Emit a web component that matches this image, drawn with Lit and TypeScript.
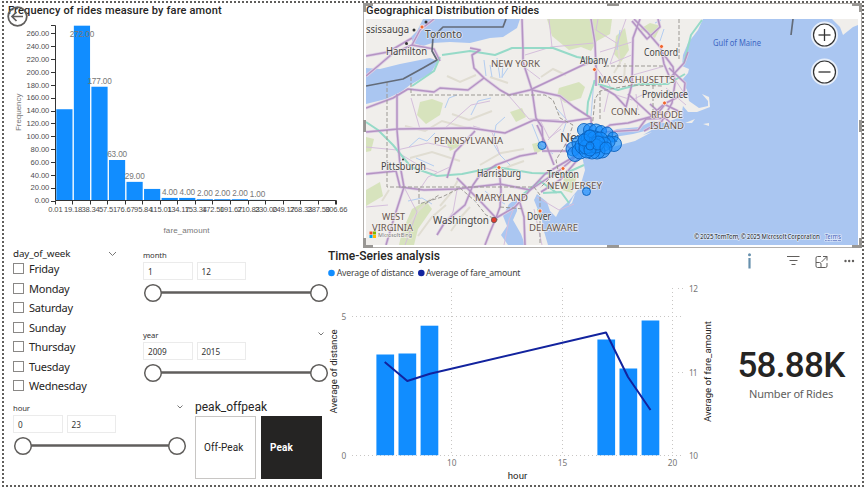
import { LitElement, html, svg, css } from "lit";
import { customElement, property } from "lit/decorators.js";

const DIN = css`Roboto, "Liberation Sans", sans-serif`;
const SEGOE = css`"Noto Sans", "Open Sans", sans-serif`;

/* ---------- Histogram ---------- */
@customElement("fare-histogram")
class FareHistogram extends LitElement {
  static styles = css`
    :host { display: block; }
    .title { margin: 0; padding-left: 4px; height: 16px; font: 500 11px/15px ${DIN}; letter-spacing: 0.16px; color: #252423; white-space: nowrap; }
    svg { display: block; }
    text { font-family: "Liberation Sans", Arial, sans-serif; }
    .bar { fill: #118dff; }
    .axis { stroke: #333; fill: none; }
    .tick { font-size: 7.6px; fill: #4d4d4d; }
    .val { font-size: 8.2px; fill: #777; }
    .name { font-size: 8px; fill: #777; }
  `;
  values = [142, 272, 177, 63, 29, 18, 4, 4, 2, 2, 2, 1];
  edges = ["0.01", "19.18", "38.34", "57.51", "76.67", "95.84", "115.01", "134.17", "153.34", "172.50", "191.67", "210.83", "230.00", "249.17", "268.33", "287.50", "306.66"];
  render() {
    const x = (i: number) => 55.5 + i * 17.55;
    const y = (v: number) => 200.5 - v * 0.6427;
    const yt = Array.from({ length: 14 }, (_, i) => i * 20);
    return html`<h2 class="title">Frequency of rides measure by fare amont</h2>
      <svg width="358" height="229" viewBox="4 19 358 229">
        ${this.values.map((v, i) => svg`<rect class="bar" x=${x(i) + 0.8} y=${y(v)} width="16.2" height=${v * 0.6427}></rect>`)}
        ${this.values.map((v, i) => i === 0 || i === 5 ? "" : svg`<text class="val" x=${x(i) + 9} y=${v === 272 ? 36.5 : y(v) - 3.2} text-anchor="middle" textLength=${v > 99 ? 24.4 : v > 9 ? 20 : 15.6}>${v}.00</text>`)}
        <path class="axis" d="M51 25.5H55.5V200.5H336.5V204.5"></path>
        ${yt.map(v => svg`<path class="axis" d="M51 ${Math.round(y(v)) + 0.5}h4.5"></path>
          <text class="tick" x="49.3" y=${y(v) + 2.8} text-anchor="end" textLength=${v > 99 ? 22.7 : v > 9 ? 18.7 : 14.6}>${v}.00</text>`)}
        ${this.edges.map((t, i) => svg`<path class="axis" d="M${Math.round(x(i)) - 0.5} 200.5v4"></path>
          <text class="tick" x=${x(i)} y="212.2" text-anchor="middle" textLength=${t.length === 4 ? 14.3 : t.length === 5 ? 18.3 : 22.3}>${t}</text>`)}
        <text class="name" transform="translate(21.3 112.3) rotate(-90)" text-anchor="middle" textLength="37.5">Frequency</text>
        <text class="name" x="186.5" y="233" text-anchor="middle" textLength="46">fare_amount</text>
      </svg>`;
  }
}

/* ---------- Map ---------- */
@customElement("ride-map")
class RideMap extends LitElement {
  static styles = css`
    :host { display: block; position: relative; box-sizing: border-box; padding: 0 3px 0 2px; border: 1px solid #b3b0ad; }
    .title { margin: 0; height: 15px; font: 500 11px/13px ${DIN}; letter-spacing: 0.16px; color: #252423; white-space: nowrap; }
    .map { display: block; overflow: hidden; }
    .handles { position: absolute; left: -1px; top: -1px; fill: none; stroke: #999794; stroke-width: 3; }
    text { font-family: ${SEGOE}; paint-order: stroke; stroke: #f4f2efcc; stroke-width: 1.6px; stroke-linejoin: round; }
    .city { fill: #444; font-size: 10px; }
    .state { fill: #66554d; font-size: 9.8px; }
    .sea { fill: #3c66c4; font-size: 8.2px; stroke: none; }
    .copy { fill: #222; font-size: 6.3px; stroke: #d9e5f8; }
    .water { fill: #aac6f1; }
    .land { fill: #f0eeeb; }
    .wood { fill: #cfdfad; opacity: 0.75; }
    .relief { fill: none; stroke: #e0ddd2; stroke-width: 2; }
    .river { fill: none; stroke: #b3cdf1; stroke-width: 1; }
    .halo { fill: none; stroke: #decfe4; stroke-width: 3; stroke-linejoin: round; }
    .road { fill: none; stroke: #b594c4; stroke-width: 1.5; stroke-linejoin: round; }
    .minor { fill: none; stroke: #d5bfdc; stroke-width: 1; }
    .toll { fill: none; stroke: #96dac8; stroke-width: 2; stroke-linejoin: round; }
    .limit { fill: none; stroke: #9c9994; stroke-width: 1; stroke-dasharray: 4 2; }
    .nation { fill: none; stroke: #636b78; stroke-width: 1.7; stroke-linejoin: round; }
    .pin { fill: #118dff; fill-opacity: 0.62; stroke: #0b62bd; stroke-width: 0.9; }
    .zoom { fill: #fff; stroke: #333; stroke-width: 1.2; }
    .glow { fill: none; stroke: #e8effa; stroke-width: 3; }
    .sign { stroke: #333; stroke-width: 1.3; }
  `;
  roads = [
    "M366 76L378 66 392 54 412 45 420 30 434 19", "M412 45l22 4 6 12", "M366 56l22-4 24-14",
    "M366 108L393 98 408 89 434 92 440 88 468 90 484 78 500 90 509 95 530 90 583 65 595 61",
    "M397 94L397 130 400 165 404 187 394 218 386 245", "M484 78L474 68 472 55 480 50 470 48",
    "M522 19L523 50 523 62 532 90 536 118 542 127 543 143", "M532 90L560 96 574 107 591 118 592 140",
    "M591 19l4 24 1 25 0 18", "M366 132L398 129 470 128 505 133 534 120 565 122 591 118",
    "M366 174L396 171 400 187 424 190 456 189 500 184 530 190 545 174 560 165 582 152",
    "M447 178L455 152 475 131", "M537 153L520 156 496 165 480 175 473 185 465 205 445 222 437 235",
    "M499 167L501 190 500 207 496 218", "M457 178L469 190 482 203 496 218",
    "M496 218L515 207 530 190 560 170 586 148", "M496 218L490 232 485 245",
    "M537 125L547 147 554 165", "M542 151h48", "M600 86L615 95 626 107 632 84 633 38 640 19",
    "M591 140L610 125 628 123 650 117 664 104 680 112", "M634 19l14 14 13 15 3 16 6 14 14-15 4-11",
    "M662 52l11 15 2 16-3 20-10 18-18 10", "M628 94l26 24 12-15 18-9 1-11-16-15",
    "M650 104l24 22M604 132l34-2 8-11 22-1", "M520 203l4 14 1 28", "M565 144l15 13-20 23-19 12", "M632 21l15 18 13-12-2-8",
  ];
  minor = [
    "M366 147l31 3 31-7 24 5", "M397 152l23 14 17 6M404 187l13 25-12 33", "M420 129l-9-31M509 96l20 23 30 1M560 96l6 24-18 20",
    "M444 129l27-24 19-4M366 207l22-2M457 190l-4 22-14 19", "M525 55l26-8 43-4M552 47l-3-28M523 66l17 13",
    "M596 67l14 19-6 26M600 52l32-10M626 19l-16 45 24-10", "M515 205l-6 15-5 25M534 209l8 36M537 197l22 13 15-6",
    "M610 93l22 7 16-8M633 75l32-9M636 94l2 16M674 78l12 18M666 88l20 17M598 19l-2 11 22 14",
    "M540 120l9 18 12-9M500 155l-8-23-19-6M420 189l8-12 24-11",
  ];
  pins: number[][] = [
    [542, 145.5, 4], [586.5, 191.5, 4], [584, 130, 6.5], [590, 130, 6.5], [596, 131, 7], [601, 131, 5.5], [607, 133, 6], [613, 137, 5], [614, 144, 7.5], [609, 142, 6],
    [573, 149, 7], [575, 154, 7.5], [579, 143, 7], [580, 151, 8], [583, 146, 8], [586, 141, 8], [590, 139, 9], [595, 139, 8], [600, 140, 8], [604, 144, 7], [602, 150, 8], [597, 151, 8],
    [592, 151, 8], [587, 150, 8], [590, 146, 7], [593, 144, 7], [588, 143, 6], [596, 146, 7], [586, 147, 7], [590, 150, 6], [598, 143, 7], [584, 140, 6], [590, 136, 6], [590, 146, 4], [606, 148, 6],
  ];
  labels: [string, number, number, number, string][] = [
    ["ssissauga", 366, 33, 43, "city"], ["Toronto", 425, 38, 37, "city"], ["Hamilton", 386, 55, 41, "city"], ["Albany", 580, 64, 28, "city"],
    ["Concord", 644, 56, 34, "city"], ["Providence", 642, 98, 46, "city"], ["Pittsburgh", 381, 170, 45, "city"], ["Harrisburg", 477, 177, 44, "city"],
    ["Trenton", 547, 178, 32, "city"], ["Washington", 433, 224, 56, "city"], ["Dover", 527, 220, 24, "city"],
    ["NEW YORK", 491, 67, 49, "state"], ["MASSACHUSETTS", 598, 83, 77, "state"], ["CONN.", 611, 115, 29, "state"], ["RHODE", 651, 118, 32, "state"],
    ["ISLAND", 650, 129, 34, "state"], ["PENNSYLVANIA", 434, 144, 69, "state"], ["NEW JERSEY", 547, 189, 55, "state"], ["MARYLAND", 475, 201, 53, "state"],
    ["WEST", 382, 220, 23, "state"], ["VIRGINIA", 372, 231, 41, "state"], ["DELAWARE", 529, 231, 49, "state"], ["Gulf of Maine", 713, 46, 48, "sea"],
  ];
  render() {
    return html`<h2 class="title">Geographical Distribution of Rides</h2>
      <svg class="map" width="492" height="226" viewBox="366 19 492 226">
        <rect class="land" x="366" y="19" width="492" height="226"></rect>
        <path class="wood" d="M547 19l5 17 17 14 12-3 10 4 6-10 13-7 2-15zM559 88l20-6 6 5-4 11-16 5-8-7zM420 102l12-3 11 4-3 12-14 9-9-9zM510 112l12-4 4 9-10 5zM366 190l14-8 3 14-17 10zM402 232l10-23 14-8 6 8-14 20-4 16h-15zM616 36l9-8 4 22-8 12-7-8zM532 144l8-2 3 8-8 4zM640 29l10-6 11 3-6 12zM366 137l8 2-3 12-5 1zM565 172l12 4-5 17-10-3zM445 140l12-2 3 8-10 5z"></path>
        <path class="relief" d="M405 126l20 5 17-10 25 7M410 158l22-6 28 9M452 114l17 6 23-9M408 226l11-16 12-11M418 236l14-19 14-12M440 206l11-13 7-13M480 165l21-12 23-4M492 176l18-10 14-5M541 77l12-8 13 6M447 76l13 6 16-7M490 77l18 6M614 73l6-10-2-16M624 82l1-19M451 231l10-14 9-10M389 190l-7 11"></path>
        <path class="river" d="M484 60l2 16M490 65l2 12M497 58l3 20M503 63l-1 15M508 68l-6 9M445 108l4-10 8-3M409 147l10-9 8 3 8-8M408 201l14-3 10 6M510 165l-10-10-7-12 3-18 9-8M505 204l-12-6-8-7M553 154l-13-10-8-20M594 80l-3 36M471 115l7-14 13-3M563 132l4-12-10-11M416 158l18 8M620 30l-3 20M664 29l-4 12M655 23l6-3"></path>
        <path class="water" d="M423 19H520L517 28 503 37 490 38 470 43 450 42 432 43 423 46 413 43 411 37 417 31zM366 68L380 69 400 64 415 61 430 58 438 61 431 73 410 85 401 92 386 99 366 104z"></path>
        <path class="water" d="M703 19L698 30 688 43 683 55 682 66 689 69 688 73 682 80 687 90 689 101 699 108 708 106 708 101 702 94 709 97 710 107 697 112 688 112 683 106 681 117 665 123 652 121 640 127 617 129 597 138 591 154 582 156 585 170 580 187 568 202 560 209 556 217 550 211 547 202 537 194 534 200 538 210 542 220 543 228 548 245H858V25L853 27 843 35 840 27 832 19zM517 198L509 204 503 216 507 226 501 235 508 245H525L521 234 513 220 517 211z"></path>
        <path class="land" d="M594 144L608 138 633 134 649 130 655 128 643 135 652 132 635 141 620 145 597 151zM685 123l10-4-3 4zM703 124l6-1v3zM569 205l4-8 2-3-3 9z"></path>
        ${this.minor.map(d => svg`<path class="minor" d=${d}></path>`)}
        ${this.roads.map(d => svg`<path class="halo" d=${d}></path>`)}
        <path class="toll" d="M366 122l12 8 15 15 18 22 26 9 25-2 34-7 36 6 32 1 20-9M440 57l-6 14-22 15M442 55L470 51 495 55 512 48 553 48 577 57 594 60M595 80l-7 22-1 13M702 20l-11 15-7 28M598 84l20 6 22-6 28 0 17-10M543 193l18-1 8 11M522 195l18-14 17 12M538 209l2 8"></path>
        ${this.roads.map(d => svg`<path class="road" d=${d}></path>`)}
        <path class="limit" d="M387 82V187H534L540 195V245M411 77v18H545L553 100 560 118 573 125 567 142 556 160 558 170 540 188M591 139l4-40 5-8 32-6 30 1M600 91v30M679 19v42M605 66l60 0M653 85v35M419 188v16l23-7 18-9 15 13 11 14 12 5M425 204l14-9M500 207l24 2"></path>
        <path class="nation" d="M366 86L403 79 423 68 437 60 432 51 433 37 443 27H503L506 19M793 19L791 35"></path>
        <g fill="#333"><circle cx="414" cy="30" r="1.5"></circle><circle cx="426" cy="22" r="1.5"></circle><circle cx="406.500" cy="43.500" r="1.500"></circle><circle cx="403" cy="159.500" r="1"></circle></g>
        <g fill="#f0652f" stroke="#fff" stroke-width=".7"><circle cx="422" cy="27" r="2"></circle><circle cx="594.500" cy="69.500" r="2"></circle><circle cx="661.500" cy="46.500" r="2"></circle><circle cx="664.500" cy="103" r="2"></circle><circle cx="499" cy="167.500" r="2"></circle><circle cx="563" cy="168.500" r="2"></circle><circle cx="540" cy="211" r="2"></circle><circle cx="494" cy="220" r="2.700" fill="#e23c2e" stroke="#555"></circle></g>
        ${this.labels.map(([t, x, y, w, c]) => svg`<text class=${c} x=${x} y=${y} textLength=${w} lengthAdjust="spacingAndGlyphs">${t}</text>`)}
        <text class="city" x="560" y="142" style="font-size:13px">New York</text>
        ${this.pins.map(([x, y, r]) => svg`<circle class="pin" cx=${x} cy=${y} r=${r}></circle>`)}
        <path fill="#f25022" d="M369.500 231.500h3v3h-3z"></path><path fill="#7fba00" d="M373 231.500h3v3h-3z"></path><path fill="#00a4ef" d="M369.500 235h3v3h-3z"></path><path fill="#ffb900" d="M373 235h3v3h-3z"></path>
        <text x="378" y="237" font-size="5.800" fill="#777" textLength="34">Microsoft Bing</text>
        <text class="copy" x="694" y="239" textLength="126">© 2025 TomTom, © 2025 Microsoft Corporation</text>
        <text class="copy" x="825" y="239" textLength="16" style="fill:#4a63b8" text-decoration="underline">Terms</text>
        ${[35, 72].map(y => svg`<circle class="glow" cx="824.500" cy=${y} r="12"></circle><circle class="zoom" cx="824.500" cy=${y} r="11"></circle><path class="sign" d="M818.500 ${y}h12"></path>`)}
        <path class="sign" d="M824.500 29v12"></path>
      </svg>
      <svg class="handles" width="499" height="245" viewBox="0 0 499 245">
        <path d="M1.500 9V1.500H10M489 1.500H497.500V9M1.500 235V243.500H10M489 243.500H497.500V235M1.500 117v12M497.500 117v12M244 1.500h12M244 243.500h12"></path>
      </svg>`;
  }
}

/* ---------- Slicers ---------- */
@customElement("range-slicer")
class RangeSlicer extends LitElement {
  static properties = { label: {}, from: {}, to: {}, span: { type: Number }, chevron: { type: Boolean } };
  declare label: string;
  declare from: string;
  declare to: string;
  declare span: number;
  declare chevron: boolean;
  static styles = css`
    :host { display: block; font-family: ${SEGOE}; }
    .head { display: flex; justify-content: space-between; align-items: center; height: 14px; font-size: 7.7px; line-height: 14px; letter-spacing: -0.1px; color: #333; }
    .head svg { margin-bottom: 3px; margin-right: 1px; }
    .fields { display: flex; gap: 4px; }
    .field { box-sizing: border-box; width: 49.5px; height: 18px; border: 1px solid #ebebeb; padding-left: 4px; font-size: 8.2px; line-height: 17px; color: #333; }
    .track { display: block; margin-top: 3px; overflow: visible; }
    .rail { stroke: #605e5c; stroke-width: 2.4; }
    .knob { fill: #fff; stroke: #605e5c; stroke-width: 1.5; }
    .chev { fill: none; stroke: #777; }
  `;
  render() {
    const w = this.span;
    return html`<div class="head"><span>${this.label}</span>
        ${this.chevron ? html`<svg width="6" height="4"><path class="chev" d="M.5 .5L3 3 5.500 .5"></path></svg>` : ""}</div>
      <div class="fields"><div class="field">${this.from}</div><div class="field">${this.to}</div></div>
      <svg class="track" width=${w + 20} height="20"><path class="rail" d="M10 9.500H${w + 10}"></path>
        <circle class="knob" cx="10" cy="10" r="8.300"></circle><circle class="knob" cx=${w + 10} cy="10" r="8.300"></circle></svg>`;
  }
}

@customElement("day-slicer")
class DaySlicer extends LitElement {
  static styles = css`
    :host { display: block; font-family: ${SEGOE}; color: #252423; }
    .head { display: flex; justify-content: space-between; align-items: center; height: 11px; font-size: 9.8px; line-height: 11px; letter-spacing: -0.1px; }
    .list { margin: 0; padding: 0; list-style: none; }
    .item { display: flex; align-items: center; gap: 5px; height: 19.5px; font-size: 11px; letter-spacing: -0.25px; }
    .box { box-sizing: border-box; width: 11px; height: 11px; border: 1px solid #8a8886; }
    .chev { fill: none; stroke: #777; }
  `;
  days = ["Friday", "Monday", "Saturday", "Sunday", "Thursday", "Tuesday", "Wednesday"];
  render() {
    return html`<div class="head"><span>day_of_week</span><svg width="9" height="6"><path class="chev" d="M1 1L4.500 4.500 8 1"></path></svg></div>
      <ul class="list">${this.days.map(d => html`<li class="item"><span class="box"></span>${d}</li>`)}</ul>`;
  }
}

@customElement("peak-slicer")
class PeakSlicer extends LitElement {
  static styles = css`
    :host { display: block; font-family: ${DIN}; color: #252423; }
    .head { height: 15px; font-size: 12px; line-height: 13px; letter-spacing: 0; }
    .tiles { display: flex; gap: 5px; }
    .tile { box-sizing: border-box; width: 61px; height: 63px; border: 1px solid #c8c6c4; padding-left: 8px; display: flex; align-items: center; font-size: 10px; letter-spacing: 0.1px; }
    .on { background: #252423; border-color: #252423; color: #fff; font-weight: 700; }
  `;
  render() {
    return html`<div class="head">peak_offpeak</div>
      <div class="tiles"><div class="tile">Off-Peak</div><div class="tile on">Peak</div></div>`;
  }
}

/* ---------- Time series ---------- */
@customElement("time-series")
class TimeSeries extends LitElement {
  static styles = css`
    :host { display: block; }
    .title { margin: 0; height: 17px; font: 500 12px/15px ${DIN}; color: #252423; white-space: nowrap; }
    svg { display: block; }
    .grid { stroke: #c8c6c4; stroke-dasharray: 1 3; fill: none; }
    .bar { fill: #118dff; }
    .line { fill: none; stroke: #12239e; stroke-width: 2; stroke-linejoin: round; }
    .tick { font: 8.300px ${SEGOE}; fill: #777; }
    .legend { font: 8.700px ${SEGOE}; fill: #444; }
    .name { font: 9.600px ${DIN}; fill: #252423; }
  `;
  bars = [[7, 355.5], [8, 354.5], [9, 326.7], [17, 340.5], [18, 369.5], [19, 321.5]];
  render() {
    const x = (h: number) => 451.5 + (h - 10) * 22.1;
    return html`<h2 class="title">Time-Series analysis</h2>
      <svg width="392" height="218" viewBox="328 267 392 218">
        <circle cx="331.500" cy="274" r="3.300" fill="#118dff"></circle><text class="legend" x="336.700" y="277" textLength="77.300">Average of distance</text>
        <circle cx="421.300" cy="274" r="3.300" fill="#12239e"></circle><text class="legend" x="426" y="277" textLength="94.500">Average of fare_amount</text>
        <path class="grid" d="M352 317.500H683M352 456.500H683M451.500 289V456M562.500 289V456M672.500 289V456M678 289.500h6M678 373.500h6"></path>
        ${this.bars.map(([h, y]) => svg`<rect class="bar" x=${x(h) - 8.8} y=${y} width="17.700" height=${456.2 - y}></rect>`)}
        <path class="line" d="M384.700 363L407.300 382 430 374.800 606 333.500 628 378 650.500 411"></path>
        <text class="tick" x="341.500" y="320.500">5</text><text class="tick" x="341.500" y="459.500">0</text>
        <text class="tick" x="689" y="292.500" textLength="9">12</text><text class="tick" x="689" y="376.500" textLength="8.500">11</text><text class="tick" x="689" y="459.500" textLength="9">10</text>
        <text class="tick" x="451.800" y="467.300" text-anchor="middle">10</text><text class="tick" x="562.500" y="467.300" text-anchor="middle">15</text><text class="tick" x="672.500" y="467.300" text-anchor="middle">20</text>
        <text class="name" x="517.500" y="480" text-anchor="middle" textLength="19.500">hour</text>
        <text class="name" transform="translate(336.500 372.500) rotate(-90)" text-anchor="middle" textLength="84">Average of distance</text>
        <text class="name" transform="translate(711 372.500) rotate(-90)" text-anchor="middle" textLength="101">Average of fare_amount</text>
      </svg>`;
  }
}

/* ---------- KPI card ---------- */
@customElement("kpi-card")
class KpiCard extends LitElement {
  static styles = css`
    :host { display: flex; flex-direction: column; align-items: center; }
    .tools { align-self: stretch; height: 24px; fill: none; stroke: #605e5c; }
    .value { margin-top: 71px; font: 500 35px/42px ${DIN}; letter-spacing: -0.7px; color: #252423; }
    .label { font: 11px/14px ${SEGOE}; letter-spacing: -0.2px; color: #605e5c; }
  `;
  render() {
    return html`<svg class="tools" width="142" height="24" viewBox="720 250 142 24">
        <path d="M749.500 258v10.500" stroke="#6790ad" stroke-width="2.200"></path><circle cx="749.500" cy="254.700" r="1.500" fill="#6790ad" stroke="none"></circle>
        <path d="M787 256.500h12.500M789.500 260.500h8M791.500 264.500h4"></path>
        <path d="M821 256.500h-3.500q-1.500 0-1.500 1.500v8q0 1.500 1.500 1.500h8q1.500 0 1.500-1.500v-3M816 262.500h3.500q1.500 0 1.500 1.500v3.500M821.500 262l5.500-5.500M823 256.500h4v4" ></path>
        <g fill="#605e5c" stroke="none"><circle cx="845.500" cy="261" r="1.200"></circle><circle cx="849.200" cy="261" r="1.200"></circle><circle cx="853" cy="261" r="1.200"></circle></g>
      </svg>
      <div class="value">58.88K</div><div class="label">Number of Rides</div>`;
  }
}

@customElement("app-root")
class AppRoot extends LitElement {
  static styles = css`
    :host { display: block; box-sizing: border-box; width: 866px; height: 489px; padding: 1px 2px 2px; background: #fff; overflow: hidden; }
    .page { box-sizing: border-box; height: 486px; border: 2px dotted #605e5c; display: grid; grid-template-rows: 245px 1fr; position: relative; }
    .top { display: grid; grid-template-columns: 359px 499px; }
    .bottom { display: grid; grid-template-columns: 324px 392px 142px; }
    .filters { display: grid; grid-template-columns: 121px 182px; grid-template-rows: 153px auto; column-gap: 9px; padding-left: 9px; }
    .lower { grid-column: 1 / -1; display: flex; gap: 11px; }
    .hour { width: 171px; }
    .stack { display: flex; flex-direction: column; gap: 25px; }
    .day { width: 104px; }
    .hist { margin-top: 0; }
    .series { padding-top: 1px; }
    .card { padding-top: 2px; }
    .back { position: absolute; left: 3px; top: 3px; fill: none; stroke: #605e5c; }
  `;
  render() {
    return html`<main class="page">
      <section class="top"><fare-histogram class="hist"></fare-histogram><ride-map></ride-map></section>
      <section class="bottom">
        <div class="filters">
          <day-slicer class="day"></day-slicer>
          <div class="stack">
            <range-slicer label="month" from="1" to="12" .span=${166}></range-slicer>
            <range-slicer label="year" from="2009" to="2015" .span=${166} chevron></range-slicer>
          </div>
          <div class="lower">
            <range-slicer class="hour" label="hour" from="0" to="23" .span=${154} chevron></range-slicer>
            <peak-slicer></peak-slicer>
          </div>
        </div>
        <time-series class="series"></time-series>
        <kpi-card class="card"></kpi-card>
      </section>
      <svg class="back" width="21" height="21" viewBox="0 0 21 21"><circle cx="10.500" cy="10.500" r="9.300" stroke-width="1.800"></circle><path d="M16 10.500H5M9.500 6L5 10.500 9.500 15" stroke-width="1.700"></path></svg>
    </main>`;
  }
}
